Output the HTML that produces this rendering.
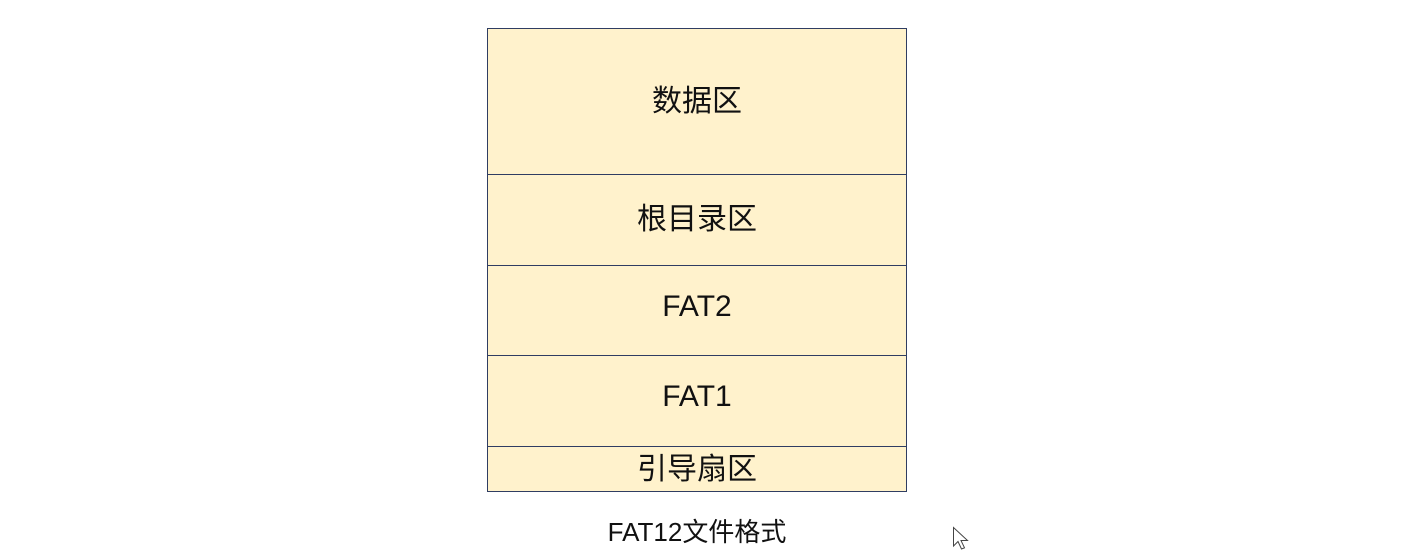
<!DOCTYPE html>
<html><head><meta charset="utf-8"><style>
body{margin:0;width:1425px;height:549px;background:#fff;position:relative;overflow:hidden;font-family:"Liberation Sans","Noto Sans CJK SC",sans-serif;}
.box{position:absolute;left:487px;width:420px;background:#fff2cc;border:1px solid #2f3d62;display:flex;align-items:center;justify-content:center;color:#111;font-size:30px;box-sizing:border-box;padding-bottom:8px;}
.cap{position:absolute;left:487px;width:420px;top:512px;text-align:center;font-size:26px;color:#111;}
</style></head><body>
<div class="box" style="top:28px;height:147px">数据区</div>
<div class="box" style="top:174px;height:92px">根目录区</div>
<div class="box" style="top:265px;height:91px">FAT2</div>
<div class="box" style="top:355px;height:92px">FAT1</div>
<div class="box" style="top:446px;height:46px;padding-bottom:6px">引导扇区</div>
<div class="cap">FAT12文件格式</div>
<svg style="position:absolute;left:952px;top:526px" width="22" height="24"><path d="M1.5 1.5 L1.5 20 L6 15.5 L9.5 23 L12.5 21.8 L9 14.5 L15.5 14.5 Z" fill="#fff" stroke="#444" stroke-width="1"/></svg>
</body></html>
